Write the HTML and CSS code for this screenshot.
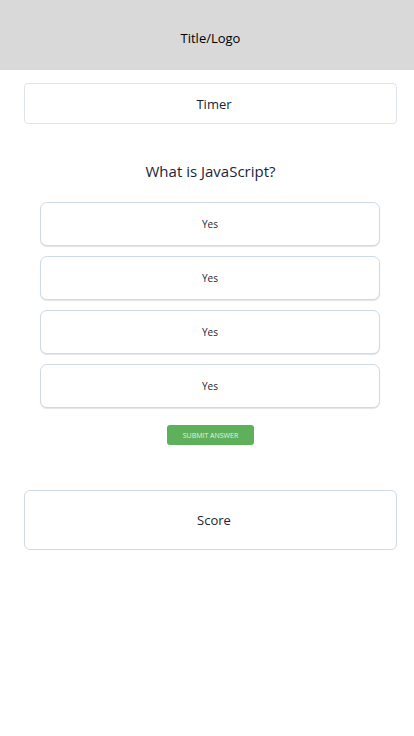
FILE: index.html
```html
<!DOCTYPE html>
<html lang="en">
<head>
<meta charset="utf-8">
<meta name="viewport" content="width=device-width, initial-scale=1">
<title>JavaScript Quiz</title>
<link rel="stylesheet" href="styles.css">
</head>
<body>
<header class="header">
  <h1 class="title">Title/Logo</h1>
</header>
<main class="quiz">
  <section class="panel timer">Timer</section>
  <h2 class="question">What is JavaScript?</h2>
  <div class="answers">
    <button type="button" class="answer">Yes</button>
    <button type="button" class="answer">Yes</button>
    <button type="button" class="answer">Yes</button>
    <button type="button" class="answer">Yes</button>
  </div>
  <button type="submit" class="submit">SUBMIT ANSWER</button>
  <section class="panel score">Score</section>
</main>
</body>
</html>
```
FILE: styles.css
```css
* {
  box-sizing: border-box;
}

body {
  margin: 0;
  background: #fff;
  color: #1a2438;
  font-family: "Open Sans", "Noto Sans", sans-serif;
}

button {
  font-family: inherit;
  cursor: pointer;
}

.header {
  padding: 26px 17px 20px 24px;
  background: #d9d9d9;
}

.title {
  margin: 0;
  color: #000;
  font-size: 13px;
  font-weight: 400;
  line-height: 24px;
  text-align: center;
}

.quiz {
  display: flex;
  flex-direction: column;
  padding: 13px 17px 24px 24px;
}

.panel {
  display: flex;
  align-items: center;
  justify-content: center;
  padding-left: 7px;
  border: 1px solid #cfdbe4;
  background: #fff;
  font-size: 13px;
}

.timer {
  min-height: 41px;
  border-color: #dfe4ea;
  border-radius: 4px;
}

.question {
  margin: 35px 0 19px;
  font-size: 15px;
  font-weight: 400;
  line-height: 24px;
  text-align: center;
}

.answers {
  display: grid;
  gap: 10px;
  padding: 0 17px 0 16px;
}

.answer {
  min-height: 44px;
  padding: 0;
  border: 1px solid #cfdbe4;
  border-radius: 7px;
  background: #fff;
  box-shadow: 0 1px 1px rgba(26, 36, 56, 0.12);
  color: inherit;
  font-size: 10px;
}

.submit {
  align-self: center;
  height: 20px;
  margin: 17px 0 45px;
  padding: 0 16px;
  border: 0;
  border-radius: 3px;
  background: #5eb05a;
  color: #e4f3e3;
  font-size: 7px;
}

.score {
  min-height: 60px;
  border-radius: 6px;
}
```
